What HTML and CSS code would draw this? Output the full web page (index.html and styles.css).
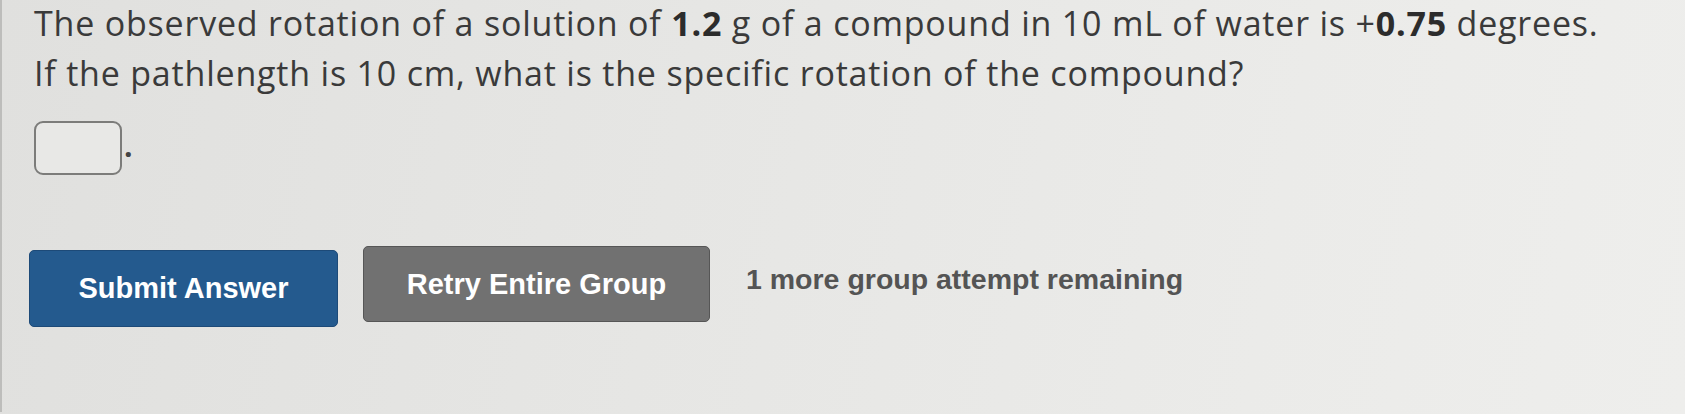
FILE: index.html
```html
<!DOCTYPE html>
<html lang="en">
<head>
<meta charset="utf-8">
<title>Specific rotation question</title>
<link rel="stylesheet" href="styles.css">
</head>
<body>
<main class="page">
  <p class="question">The observed rotation of a solution of <b>1.2</b> g of a compound in 10 mL of water is +<b>0.75</b> degrees. If the pathlength is 10 cm, what is the specific rotation of the compound?</p>
  <div class="answer-row">
    <span class="answer-box"></span><span class="period">.</span>
  </div>
  <div class="actions">
    <button class="btn btn-submit" type="button">Submit Answer</button>
    <button class="btn btn-retry" type="button">Retry Entire Group</button>
    <span class="attempts">1 more group attempt remaining</span>
  </div>
</main>
</body>
</html>
```

FILE: styles.css
```css
html, body {
  margin: 0;
  padding: 0;
}

body {
  width: 1685px;
  height: 414px;
  overflow: hidden;
  background: linear-gradient(100deg, #e0e0de 0%, #e6e6e4 40%, #ebebe9 75%, #eeeeec 100%);
}

.page {
  box-sizing: border-box;
  height: 414px;
  border-left: 2px solid #bdbdbb;
  padding-left: 32px;
}

.question {
  margin: -2px 0 0 0;
  width: 1580px;
  font-family: "Open Sans", "Noto Sans", sans-serif;
  font-size: 34px;
  letter-spacing: 0.8px;
  line-height: 50px;
  color: #3a3a3a;
}

.question b {
  font-weight: 700;
  color: #2c2c2c;
}

.answer-row {
  display: flex;
  align-items: flex-end;
  margin-top: 23px;
}

.answer-box {
  box-sizing: border-box;
  width: 88px;
  height: 54px;
  border: 2px solid #7c7c7a;
  border-radius: 9px;
  background: #e8e8e6;
}

.period {
  font-family: "Open Sans", sans-serif;
  font-weight: 700;
  font-size: 30px;
  line-height: 30px;
  color: #444;
  margin-left: 2px;
  margin-bottom: 14px;
}

.actions {
  display: flex;
  align-items: flex-start;
  margin-top: 71px;
  margin-left: -5px;
}

.btn {
  box-sizing: border-box;
  height: 77px;
  border-radius: 5px;
  font-family: "Liberation Sans", Arial, sans-serif;
  font-weight: 700;
  font-size: 29px;
  color: #ffffff;
  padding: 0;
  cursor: pointer;
}

.btn-submit {
  width: 309px;
  margin-top: 4px;
  background: #245a8e;
  border: 1px solid #1d4a78;
}

.btn-retry {
  width: 347px;
  height: 76px;
  margin-left: 25px;
  background: #717171;
  border: 1px solid #565656;
}

.attempts {
  margin-left: 36px;
  margin-top: 16px;
  font-family: "Liberation Sans", Arial, sans-serif;
  font-weight: 700;
  font-size: 28.5px;
  line-height: 34px;
  color: #545454;
}
```
